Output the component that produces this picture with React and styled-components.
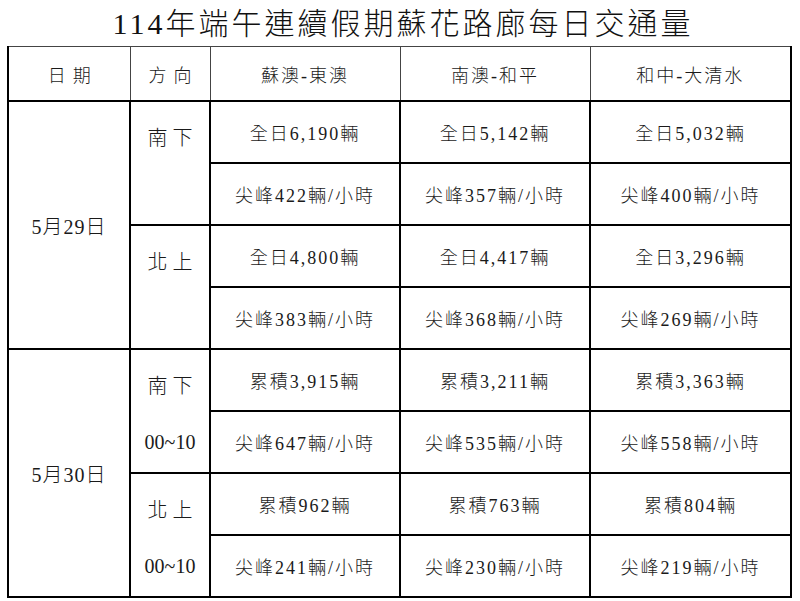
import React from "react";
import styled, { createGlobalStyle } from "styled-components";

const GlobalStyle = createGlobalStyle`
  html, body {
    margin: 0;
    padding: 0;
    background: #ffffff;
  }
  body {
    font-family: "Liberation Serif", "Noto Sans CJK TC", serif;
    font-weight: 300;
    color: #1a1a1a;
  }
`;

const Page = styled.div`
  width: 800px;
  height: 601px;
  display: flex;
  flex-direction: column;
  align-items: center;
  overflow: hidden;
`;

const Title = styled.h1`
  margin: 0;
  height: 46px;
  display: flex;
  align-items: center;
  justify-content: center;
  padding: 0 0 4px 6px;
  box-sizing: border-box;
  font-size: 30px;
  font-weight: 300;
  letter-spacing: 3px;
  color: #111;
`;

const Table = styled.table`
  width: 783px;
  margin-left: -1px;
  border-collapse: collapse;
  table-layout: fixed;
  border: 2px solid #000;
  border-top: 1.5px solid #555;
`;

const HeadCell = styled.th`
  height: 53px;
  padding: 0;
  font-size: 18px;
  font-weight: 300;
  letter-spacing: ${(p) => (p.$wide ? "7px" : "2px")};
  text-indent: ${(p) => (p.$wide ? "7px" : "0")};
  text-align: center;
  border: 1.5px solid #444;
  border-bottom: 2px solid #000;
`;

const Row = styled.tr`
  height: 62px;
`;

const DateCell = styled.td`
  padding: 0;
  font-size: 20px;
  letter-spacing: 1px;
  text-align: center;
  vertical-align: middle;
  border: 2px solid #000;
`;

const DirCell = styled.td`
  padding: 8px 0 0;
  vertical-align: top;
  text-align: center;
  border: 2px solid #000;
`;

const DirLine = styled.div`
  height: 56px;
  line-height: 56px;
  font-size: 20px;
  letter-spacing: ${(p) => (p.$cjk ? "5px" : "0px")};
  text-indent: ${(p) => (p.$cjk ? "5px" : "0px")};
`;

const ValueCell = styled.td`
  padding: 0;
  font-size: 18px;
  letter-spacing: 2px;
  text-align: center;
  vertical-align: middle;
  border: 2px solid #000;
`;

const routes = ["蘇澳-東澳", "南澳-和平", "和中-大清水"];

const days = [
  {
    date: "5月29日",
    dirs: [
      {
        lines: ["南下"],
        rows: [
          ["全日6,190輛", "全日5,142輛", "全日5,032輛"],
          ["尖峰422輛/小時", "尖峰357輛/小時", "尖峰400輛/小時"],
        ],
      },
      {
        lines: ["北上"],
        rows: [
          ["全日4,800輛", "全日4,417輛", "全日3,296輛"],
          ["尖峰383輛/小時", "尖峰368輛/小時", "尖峰269輛/小時"],
        ],
      },
    ],
  },
  {
    date: "5月30日",
    dirs: [
      {
        lines: ["南下", "00~10"],
        rows: [
          ["累積3,915輛", "累積3,211輛", "累積3,363輛"],
          ["尖峰647輛/小時", "尖峰535輛/小時", "尖峰558輛/小時"],
        ],
      },
      {
        lines: ["北上", "00~10"],
        rows: [
          ["累積962輛", "累積763輛", "累積804輛"],
          ["尖峰241輛/小時", "尖峰230輛/小時", "尖峰219輛/小時"],
        ],
      },
    ],
  },
];

export default function App() {
  return (
    <Page>
      <GlobalStyle />
      <Title>114年端午連續假期蘇花路廊每日交通量</Title>
      <Table>
        <colgroup>
          <col style={{ width: 122 }} />
          <col style={{ width: 80 }} />
          <col style={{ width: 190 }} />
          <col style={{ width: 190 }} />
          <col style={{ width: 201 }} />
        </colgroup>
        <thead>
          <tr>
            <HeadCell $wide>日期</HeadCell>
            <HeadCell $wide>方向</HeadCell>
            {routes.map((r) => (
              <HeadCell key={r}>{r}</HeadCell>
            ))}
          </tr>
        </thead>
        <tbody>
          {days.map((day) =>
            day.dirs.map((dir, di) =>
              dir.rows.map((vals, ri) => (
                <Row key={day.date + di + ri}>
                  {di === 0 && ri === 0 && (
                    <DateCell rowSpan={4}>{day.date}</DateCell>
                  )}
                  {ri === 0 && (
                    <DirCell rowSpan={2}>
                      {dir.lines.map((l, li) => (
                        <DirLine key={l} $cjk={li === 0}>
                          {l}
                        </DirLine>
                      ))}
                    </DirCell>
                  )}
                  {vals.map((v, vi) => (
                    <ValueCell key={vi}>{v}</ValueCell>
                  ))}
                </Row>
              ))
            )
          )}
        </tbody>
      </Table>
    </Page>
  );
}
